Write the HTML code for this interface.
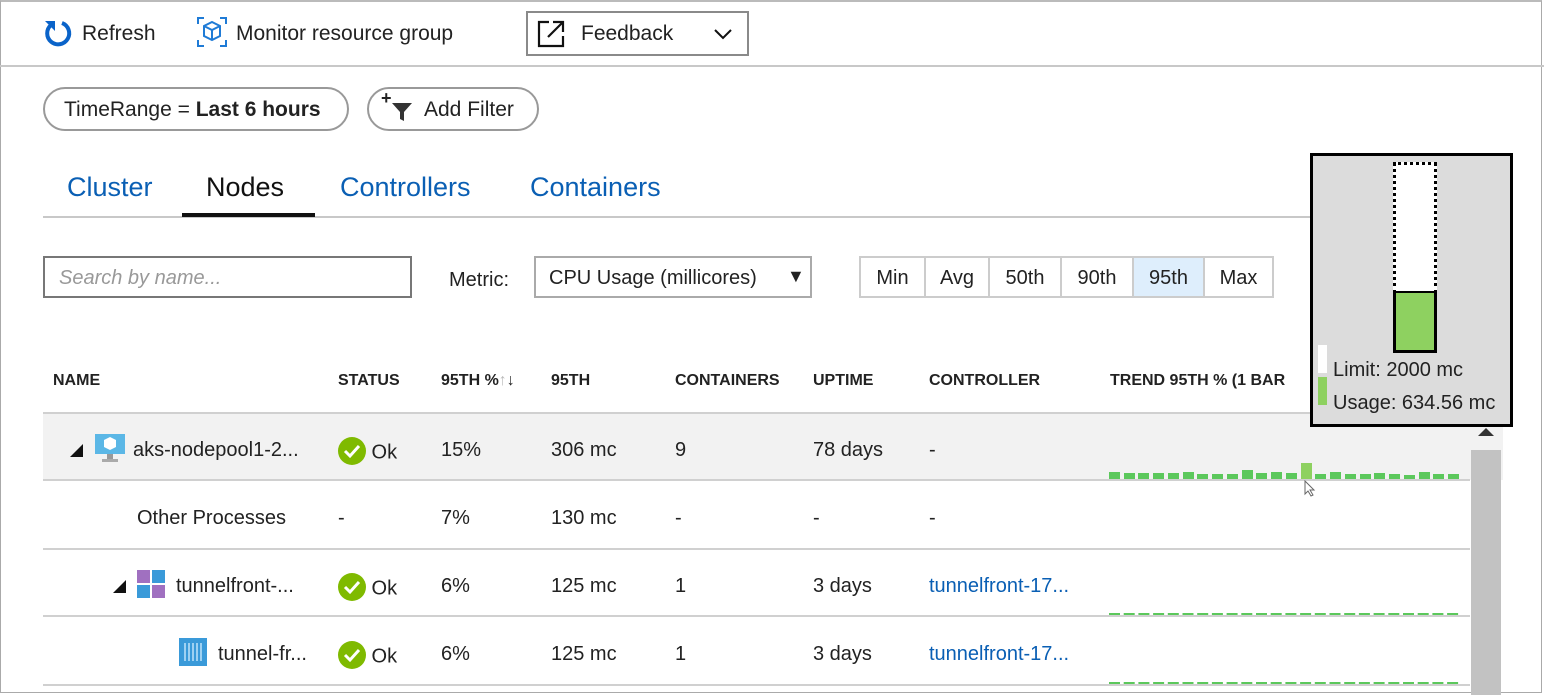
<!DOCTYPE html>
<html><head><meta charset="utf-8"><style>
*{margin:0;padding:0;box-sizing:border-box}
body{width:1544px;height:695px;background:#fff;font-family:"Segoe UI","Liberation Sans",sans-serif;color:#222;position:relative;overflow:hidden}
.a{position:absolute;white-space:nowrap}
.t20{font-size:21px;margin-top:3px}
.hd{font-size:16px;font-weight:bold;top:372px}
.cell{font-size:20px;margin-top:3px}
.tab{font-size:27px;top:172px}
.line{position:absolute;left:43px;width:1427px;height:2px;background:#d0d0d0}
.btn{position:absolute;top:256px;height:42px;border:2px solid #ccc;font-size:20px;text-align:center;line-height:40px}
.ok{display:inline-block;width:28px;height:28px;border-radius:50%;background:#7fba00;vertical-align:middle;position:relative;top:-2px}
</style></head><body>
<div class="a" style="left:0;top:0;width:1542px;height:693px;border:1px solid #aaa;border-top:2px solid #bbb"></div>
<!-- toolbar -->
<svg class="a" style="left:42px;top:18px" width="32" height="32" viewBox="0 0 32 32"><path d="M9 7 A11 11 0 1 0 20 5" fill="none" stroke="#0a63c9" stroke-width="4"/><path d="M3 3 L13 3 L13 13 Z" fill="#0a63c9"/></svg>
<div class="a t20" style="left:82px;top:19px">Refresh</div>
<svg class="a" style="left:196px;top:16px" width="32" height="32" viewBox="0 0 32 32" fill="none" stroke="#1f7bd6" stroke-width="2"><path d="M2 8V2h6M24 2h6v6M30 24v6h-6M8 30H2v-6"/><path d="M16 6l8 4v10l-8 4-8-4V10z M8 10l8 4 8-4 M16 14v10"/></svg>
<div class="a t20" style="left:236px;top:19px">Monitor resource group</div>
<div class="a" style="left:526px;top:11px;width:223px;height:45px;border:2px solid #8a8a8a"></div>
<svg class="a" style="left:537px;top:20px" width="28" height="28" viewBox="0 0 28 28" fill="none" stroke="#111" stroke-width="2.2"><path d="M12 2H2v24h24V16M16 2h10v10M26 2L11 17"/></svg>
<div class="a t20" style="left:581px;top:19px">Feedback</div>
<svg class="a" style="left:713px;top:28px" width="20" height="12" viewBox="0 0 20 12"><path d="M2 2l8 8 8-8" fill="none" stroke="#111" stroke-width="2"/></svg>
<div class="a" style="left:0;top:65px;width:1544px;height:2px;background:#c8c8c8"></div>
<!-- filters -->
<div class="a" style="left:43px;top:87px;width:306px;height:44px;border:2px solid #999;border-radius:22px"></div>
<div class="a t20" style="left:64px;top:95px">TimeRange = <b>Last 6 hours</b></div>
<div class="a" style="left:367px;top:87px;width:172px;height:44px;border:2px solid #999;border-radius:22px"></div>
<div class="a" style="left:381px;top:88px;font-size:18px;font-weight:bold">+</div>
<svg class="a" style="left:391px;top:100px" width="22" height="24" viewBox="0 0 22 24"><path d="M1 3h20l-8 9v9l-4-2v-7z" fill="#333"/></svg>
<div class="a t20" style="left:424px;top:95px">Add Filter</div>
<!-- tabs -->
<div class="a tab" style="left:67px;color:#0a5fb4">Cluster</div>
<div class="a tab" style="left:206px;color:#111">Nodes</div>
<div class="a tab" style="left:340px;color:#0a5fb4">Controllers</div>
<div class="a tab" style="left:530px;color:#0a5fb4">Containers</div>
<div class="a" style="left:43px;top:216px;width:1270px;height:2px;background:#c8c8c8"></div>
<div class="a" style="left:182px;top:213px;width:133px;height:4px;background:#111"></div>
<!-- search row -->
<div class="a" style="left:43px;top:256px;width:369px;height:42px;border:2px solid #777"></div>
<div class="a" style="left:59px;top:267px;font-size:20px;font-style:italic;color:#999">Search by name...</div>
<div class="a cell" style="left:449px;top:266px">Metric:</div>
<div class="a" style="left:534px;top:256px;width:278px;height:42px;border:2px solid #aaa"></div>
<div class="a cell" style="left:549px;top:264px">CPU Usage (millicores)</div>
<div class="a" style="left:787px;top:266px;font-size:18px">▼</div>
<div class="btn" style="left:859px;width:67px">Min</div>
<div class="btn" style="left:924px;width:66px">Avg</div>
<div class="btn" style="left:988px;width:74px">50th</div>
<div class="btn" style="left:1060px;width:74px">90th</div>
<div class="btn" style="left:1132px;width:73px;background:#deeefc">95th</div>
<div class="btn" style="left:1203px;width:71px">Max</div>
<!-- header -->
<div class="a hd" style="left:53px">NAME</div>
<div class="a hd" style="left:338px">STATUS</div>
<div class="a hd" style="left:441px">95TH %<span style="color:#bbb;font-weight:normal">↑</span><span style="font-weight:normal">↓</span></div>
<div class="a hd" style="left:551px">95TH</div>
<div class="a hd" style="left:675px">CONTAINERS</div>
<div class="a hd" style="left:813px">UPTIME</div>
<div class="a hd" style="left:929px">CONTROLLER</div>
<div class="a hd" style="left:1110px">TREND 95TH % (1 BAR</div>
<div class="line" style="top:412px"></div>
<div class="a" style="left:43px;top:414px;width:1460px;height:66px;background:#f2f2f2"></div>
<div class="line" style="top:479px"></div>
<div class="line" style="top:548px"></div>
<div class="line" style="top:615px"></div>
<div class="line" style="top:684px"></div>
<!-- row1 -->
<div class="a" style="left:70px;top:444px;width:0;height:0;border-left:13px solid transparent;border-bottom:13px solid #111"></div>
<svg class="a" style="left:94px;top:433px" width="32" height="30" viewBox="0 0 32 30"><rect x="1" y="1" width="30" height="20" fill="#5bb7e6"/><path d="M16 4l6 3v7l-6 3-6-3V7z" fill="#fff"/><rect x="13" y="21" width="6" height="5" fill="#999"/><rect x="8" y="26" width="16" height="3" fill="#aaa"/></svg>
<div class="a cell" style="left:133px;top:436px">aks-nodepool1-2...</div>
<div class="a cell" style="left:338px;top:436px"><span class="ok"><svg width="28" height="28" viewBox="0 0 28 28"><path d="M7 14l5 5 9-10" fill="none" stroke="#fff" stroke-width="3"/></svg></span> Ok</div>
<div class="a cell" style="left:441px;top:436px">15%</div>
<div class="a cell" style="left:551px;top:436px">306 mc</div>
<div class="a cell" style="left:675px;top:436px">9</div>
<div class="a cell" style="left:813px;top:436px">78 days</div>
<div class="a cell" style="left:929px;top:436px">-</div>
<!-- row2 -->
<div class="a cell" style="left:137px;top:504px">Other Processes</div>
<div class="a cell" style="left:338px;top:504px">-</div>
<div class="a cell" style="left:441px;top:504px">7%</div>
<div class="a cell" style="left:551px;top:504px">130 mc</div>
<div class="a cell" style="left:675px;top:504px">-</div>
<div class="a cell" style="left:813px;top:504px">-</div>
<div class="a cell" style="left:929px;top:504px">-</div>
<!-- row3 -->
<div class="a" style="left:113px;top:580px;width:0;height:0;border-left:13px solid transparent;border-bottom:13px solid #111"></div>
<svg class="a" style="left:136px;top:569px" width="30" height="30" viewBox="0 0 30 30"><rect x="1" y="1" width="13" height="13" fill="#a070c0"/><rect x="16" y="1" width="13" height="13" fill="#3a9ad9"/><rect x="1" y="16" width="13" height="13" fill="#3a9ad9"/><rect x="16" y="16" width="13" height="13" fill="#a070c0"/></svg>
<div class="a cell" style="left:176px;top:572px">tunnelfront-...</div>
<div class="a cell" style="left:338px;top:572px"><span class="ok"><svg width="28" height="28" viewBox="0 0 28 28"><path d="M7 14l5 5 9-10" fill="none" stroke="#fff" stroke-width="3"/></svg></span> Ok</div>
<div class="a cell" style="left:441px;top:572px">6%</div>
<div class="a cell" style="left:551px;top:572px">125 mc</div>
<div class="a cell" style="left:675px;top:572px">1</div>
<div class="a cell" style="left:813px;top:572px">3 days</div>
<div class="a cell" style="left:929px;top:572px;color:#0a5fb4">tunnelfront-17...</div>
<!-- row4 -->
<svg class="a" style="left:178px;top:637px" width="30" height="30" viewBox="0 0 30 30"><rect x="1" y="1" width="28" height="28" fill="#3a9ad9"/><path d="M7 6v18M11 6v18M15 6v18M19 6v18M23 6v18" stroke="#bfe3fa" stroke-width="1.5"/></svg>
<div class="a cell" style="left:218px;top:640px">tunnel-fr...</div>
<div class="a cell" style="left:338px;top:640px"><span class="ok"><svg width="28" height="28" viewBox="0 0 28 28"><path d="M7 14l5 5 9-10" fill="none" stroke="#fff" stroke-width="3"/></svg></span> Ok</div>
<div class="a cell" style="left:441px;top:640px">6%</div>
<div class="a cell" style="left:551px;top:640px">125 mc</div>
<div class="a cell" style="left:675px;top:640px">1</div>
<div class="a cell" style="left:813px;top:640px">3 days</div>
<div class="a cell" style="left:929px;top:640px;color:#0a5fb4">tunnelfront-17...</div>
<!-- trend bars -->
<svg class="a" style="left:1109px;top:460px" width="352" height="20">
<g fill="#5cc85c">
<rect x="0" y="12" width="11" height="7"/><rect x="15" y="13" width="11" height="6"/><rect x="29" y="13" width="11" height="6"/><rect x="44" y="13" width="11" height="6"/><rect x="59" y="13" width="11" height="6"/><rect x="74" y="12" width="11" height="7"/><rect x="88" y="14" width="11" height="5"/><rect x="103" y="14" width="11" height="5"/><rect x="118" y="14" width="11" height="5"/><rect x="133" y="10" width="11" height="9"/><rect x="147" y="13" width="11" height="6"/><rect x="162" y="12" width="11" height="7"/><rect x="177" y="13" width="11" height="6"/><rect x="192" y="3" width="11" height="16" fill="#8ed160"/><rect x="206" y="14" width="11" height="5"/><rect x="221" y="12" width="11" height="7"/><rect x="236" y="14" width="11" height="5"/><rect x="251" y="14" width="11" height="5"/><rect x="265" y="13" width="11" height="6"/><rect x="280" y="14" width="11" height="5"/><rect x="295" y="15" width="11" height="4"/><rect x="310" y="12" width="11" height="7"/><rect x="324" y="14" width="11" height="5"/><rect x="339" y="14" width="11" height="5"/>
</g></svg>
<svg class="a" style="left:1109px;top:612px" width="352" height="4"><line x1="0" y1="2" x2="351" y2="2" stroke="#5cc85c" stroke-width="2" stroke-dasharray="11 3.7"/></svg>
<svg class="a" style="left:1109px;top:681px" width="352" height="4"><line x1="0" y1="2" x2="351" y2="2" stroke="#5cc85c" stroke-width="2" stroke-dasharray="11 3.7"/></svg>
<!-- cursor -->
<svg class="a" style="left:1304px;top:480px" width="14" height="18" viewBox="0 0 14 18"><path d="M1 1v13l3-3 3 5 2-1-3-5h4z" fill="#fff" stroke="#666"/></svg>
<!-- scrollbar -->
<div class="a" style="left:1471px;top:450px;width:30px;height:245px;background:#c2c2c2"></div>
<div class="a" style="left:1478px;top:428px;width:0;height:0;border-left:8px solid transparent;border-right:8px solid transparent;border-bottom:8px solid #333"></div>
<!-- tooltip -->
<div class="a" style="left:1310px;top:153px;width:203px;height:274px;border:3px solid #000;background:#dcdcdc"></div>
<div class="a" style="left:1393px;top:162px;width:44px;height:132px;border:3px dotted #000;border-bottom:none;background:#fff"></div>
<div class="a" style="left:1393px;top:291px;width:44px;height:62px;border:3px solid #000;border-top:2px solid #000;background:#8ed160"></div>
<div class="a" style="left:1318px;top:345px;width:9px;height:28px;background:#fff"></div>
<div class="a" style="left:1318px;top:377px;width:9px;height:28px;background:#8ed160"></div>
<div class="a cell" style="left:1333px;top:356px">Limit: 2000 mc</div>
<div class="a cell" style="left:1333px;top:389px">Usage: 634.56 mc</div>
</body></html>
